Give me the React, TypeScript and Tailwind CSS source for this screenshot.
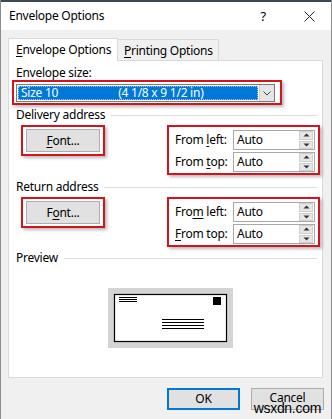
import React from "react";

function U({ children }: { children: React.ReactNode }) {
  return <span className="underline decoration-1 underline-offset-[2px]">{children}</span>;
}

function RedBox({ className, children }: { className: string; children: React.ReactNode }) {
  return (
    <div className={"border-2 border-[#d3141c] shadow-[2px_2px_3px_rgba(0,0,0,0.28)] " + className}>
      {children}
    </div>
  );
}

function Spinner() {
  return (
    <div className="w-[14px] h-[18px] flex flex-col gap-px my-px mr-px">
      <div className="flex-1 bg-[#e6e6e6] border border-[#cfcfcf] flex items-center justify-center">
        <svg width="7" height="4" viewBox="0 0 7 4"><path d="M0.5 3.5 L3.5 0.5 L6.5 3.5 Z" fill="#333" /></svg>
      </div>
      <div className="flex-1 bg-[#e6e6e6] border border-[#cfcfcf] flex items-center justify-center">
        <svg width="7" height="4" viewBox="0 0 7 4"><path d="M0.5 0.5 L3.5 3.5 L6.5 0.5 Z" fill="#333" /></svg>
      </div>
    </div>
  );
}

function SpinRow({ label }: { label: React.ReactNode }) {
  return (
    <div className="flex items-center h-[20px]">
      <div className="w-[58px] text-[12px] leading-[16px] text-black">{label}</div>
      <div className="w-[82px] h-[20px] border border-[#a8a8a8] bg-white flex items-center">
        <div className="flex-1 pl-[3px] text-[12px] leading-[18px]">Auto</div>
        <Spinner />
      </div>
    </div>
  );
}

function GroupLabel({ text, className }: { text: string; className: string }) {
  return (
    <div className={"flex items-center h-[16px] pr-[5px] " + className}>
      <span className="text-[12px] leading-[16px] text-black">{text}</span>
      <div className="flex-1 h-px bg-[#dcdcdc] ml-[6px]" />
    </div>
  );
}

function FontButton({ children }: { children: React.ReactNode }) {
  return (
    <RedBox className="ml-[12px] w-[84px] h-[31px] p-[2px]">
      <div className="w-[74px] h-[23px] ml-[1px] bg-[#e1e1e1] border border-[#adadad] flex items-center justify-center text-[12px] leading-[16px]">
        {children}
      </div>
    </RedBox>
  );
}

function AddressRow({ fontLabel, l1, l2 }: { fontLabel: React.ReactNode; l1: React.ReactNode; l2: React.ReactNode }) {
  return (
    <div className="flex items-start">
      <FontButton>{fontLabel}</FontButton>
      <RedBox className="ml-[62px] w-[153px] h-[50px] pt-[3px] pl-[6px] flex flex-col gap-[2px]">
        <SpinRow label={l1} />
        <SpinRow label={l2} />
      </RedBox>
    </div>
  );
}

export default function App() {
  return (
    <div className="w-[332px] h-[419px] bg-[#f0f0f0] font-['Noto_Sans',sans-serif] tracking-[-0.25px] text-black relative overflow-hidden border-l border-r border-[#8c8c8c] flex flex-col">
      <div className="h-[2px] bg-[#3d4755]" />
      {/* title bar */}
      <div className="h-[28px] bg-white flex items-center">
        <span className="ml-[8px] text-[12px] leading-[16px]">Envelope Options</span>
        <span className="ml-auto text-[13px] leading-[16px] mr-[38px]">?</span>
        <svg width="11" height="11" viewBox="0 0 11 11" className="mr-[16px]">
          <path d="M0.5 0.5 L10.5 10.5 M10.5 0.5 L0.5 10.5" stroke="#222" strokeWidth="1" />
        </svg>
      </div>
      {/* tabs */}
      <div className="mt-[8px] ml-[7px] flex items-end h-[22px] relative z-10">
        <div className="w-[110px] h-[23px] -mb-px bg-white border border-b-0 border-[#d9d9d9] pl-[7px] pt-[3px] text-[12px] leading-[16px]">
          <U>E</U>nvelope Options
        </div>
        <div className="w-[101px] h-[21px] bg-[#f0f0f0] border border-l-0 border-b-0 border-[#d9d9d9] pl-[6px] pt-[3px] text-[12px] leading-[16px]">
          <U>P</U>rinting Options
        </div>
      </div>
      {/* panel */}
      <div className="ml-[7px] w-[315px] h-[318px] bg-white border border-[#d9d9d9] pl-[7px] pt-[4px] flex flex-col">
        <div className="text-[12px] leading-[16px] h-[16px]">Envelope size:</div>
        <RedBox className="-mt-[1px] -ml-[4px] w-[270px] h-[25px] p-[2px]">
          <div className="w-[259px] h-[18px] border border-[#7a7a7a] bg-white flex">
            <div className="flex-1 m-px bg-[#0078d7] border border-dotted border-[#9cc9ef] flex items-center text-white text-[12px] leading-[14px]">
              <span className="ml-[2px]">Size 10</span>
              <span className="ml-[60px]">(4 1/8 x 9 1/2 in)</span>
            </div>
            <div className="w-[15px] bg-[#e5e5e5] border-l border-[#cfcfcf] flex items-center justify-center">
              <svg width="8" height="5" viewBox="0 0 8 5"><path d="M0.5 0.5 L4 4 L7.5 0.5" stroke="#444" fill="none" strokeWidth="1" /></svg>
            </div>
          </div>
        </RedBox>
        <GroupLabel text="Delivery address" className="mt-[2px]" />
        <div className="mt-[2px] -ml-[7px]">
          <AddressRow
            fontLabel={<><U>F</U>ont...</>}
            l1={<>From <U>l</U>eft:</>}
            l2={<>From <U>t</U>op:</>}
          />
        </div>
        <GroupLabel text="Return address" className="mt-[4px]" />
        <div className="mt-[2px] -ml-[7px]">
          <AddressRow
            fontLabel={<>F<U>o</U>nt...</>}
            l1={<>Fro<U>m</U> left:</>}
            l2={<><U>F</U>rom top:</>}
          />
        </div>
        <GroupLabel text="Preview" className="mt-[3px]" />
        <div className="mt-[22px] ml-[92px]">
          <svg width="125" height="60" viewBox="0 0 125 60">
            <rect x="0" y="0" width="125" height="60" fill="#d4d4d4" />
            <rect x="6.5" y="6.5" width="112" height="47" fill="#fff" stroke="#000" strokeWidth="1.2" />
            <rect x="105" y="9" width="8" height="8" fill="#000" />
            <path d="M11 9.5 H29 M11 11.5 H29 M11 13.5 H29" stroke="#000" strokeWidth="1" />
            <path d="M54 31.5 H96 M54 34.5 H96 M54 37.5 H96 M54 40.5 H96" stroke="#000" strokeWidth="1" />
          </svg>
        </div>
      </div>
      {/* buttons */}
      <div className="mt-[10px] flex">
        <div className="ml-[166px] w-[73px] h-[22px] bg-[#e1e1e1] border-2 border-[#0078d7] flex items-center justify-center text-[12px] leading-[16px]">
          OK
        </div>
        <div className="ml-[11px] w-[73px] h-[22px] bg-[#e1e1e1] border border-[#adadad] flex items-start justify-center pt-[1px] text-[12px] leading-[16px]">
          Cancel
        </div>
      </div>
      <div className="absolute right-[10px] bottom-[3px] text-[14px] leading-[16px] font-['Liberation_Sans',sans-serif] text-black tracking-[-0.3px]">
        wsxdn.com
      </div>
    </div>
  );
}
